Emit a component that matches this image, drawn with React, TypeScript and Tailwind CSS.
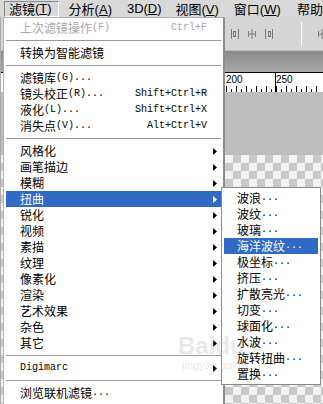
import React from "react";

type Item =
  | { kind: "sep" }
  | { kind: "row"; name: string; suffix?: string; shortcut?: string; sub?: boolean; active?: boolean; disabled?: boolean };

const mainItems: Item[] = [
  { kind: "row", name: "上次滤镜操作", suffix: "(F)", shortcut: "Ctrl+F", disabled: true },
  { kind: "sep" },
  { kind: "row", name: "转换为智能滤镜" },
  { kind: "sep" },
  { kind: "row", name: "滤镜库", suffix: "(G)..." },
  { kind: "row", name: "镜头校正", suffix: "(R)...", shortcut: "Shift+Ctrl+R" },
  { kind: "row", name: "液化", suffix: "(L)...", shortcut: "Shift+Ctrl+X" },
  { kind: "row", name: "消失点", suffix: "(V)...", shortcut: "Alt+Ctrl+V" },
  { kind: "sep" },
  { kind: "row", name: "风格化", sub: true },
  { kind: "row", name: "画笔描边", sub: true },
  { kind: "row", name: "模糊", sub: true },
  { kind: "row", name: "扭曲", sub: true, active: true },
  { kind: "row", name: "锐化", sub: true },
  { kind: "row", name: "视频", sub: true },
  { kind: "row", name: "素描", sub: true },
  { kind: "row", name: "纹理", sub: true },
  { kind: "row", name: "像素化", sub: true },
  { kind: "row", name: "渲染", sub: true },
  { kind: "row", name: "艺术效果", sub: true },
  { kind: "row", name: "杂色", sub: true },
  { kind: "row", name: "其它", sub: true },
  { kind: "sep" },
  { kind: "row", name: "", suffix: "Digimarc", sub: true },
  { kind: "sep" },
  { kind: "row", name: "浏览联机滤镜", suffix: "..." },
];

const subItems = [
  "波浪", "波纹", "玻璃", "海洋波纹", "极坐标", "挤压",
  "扩散亮光", "切变", "球面化", "水波", "旋转扭曲", "置换",
];

const cjk = { fontFamily: '"Noto Sans CJK SC", sans-serif' };
const mono = { fontFamily: '"Liberation Mono", monospace' };
const sans = { fontFamily: '"Liberation Sans", sans-serif' };

function Arrow({ white }: { white?: boolean }) {
  return (
    <svg width="4" height="7" viewBox="0 0 4 7" className="mr-[4px]">
      <path d="M0 0 L4 3.5 L0 7 Z" fill={white ? "#fff" : "#000"} />
    </svg>
  );
}

function Sep() {
  return (
    <div className="h-[9px] flex flex-col justify-center">
      <div className="h-px bg-[#9a9a9a]" />
      <div className="h-px bg-white" />
    </div>
  );
}

function Row({ item }: { item: Extract<Item, { kind: "row" }> }) {
  const color = item.disabled ? "text-[#a8a8a8]" : item.active ? "text-white" : "text-black";
  return (
    <div className={`h-4 flex items-center pl-[14px] ${item.active ? "bg-[#316ac5]" : ""} ${color}`}>
      <span className="text-[12px] leading-none" style={cjk}>{item.name}</span>
      {item.suffix && <span className="text-[10px] leading-none" style={mono}>{item.suffix}</span>}
      <div className="flex-1" />
      {item.shortcut && <span className="text-[10px] leading-none pr-[14px]" style={mono}>{item.shortcut}</span>}
      {item.sub && <Arrow white={item.active} />}
    </div>
  );
}

function ToolIcon({ kind }: { kind: number }) {
  return (
    <svg width="10" height="12" viewBox="0 0 10 12">
      {kind === 0 && (
        <g stroke="#7a7a7a" fill="none">
          <path d="M1.5 1 V11" />
          <rect x="3.5" y="3.5" width="2" height="5" />
          <path d="M8.5 1 V11" />
        </g>
      )}
      {kind === 1 && (
        <g stroke="#7a7a7a" fill="none">
          <path d="M1.5 3 V9" />
          <path d="M5 1 V11" />
          <path d="M1.5 6 H8.5" />
          <path d="M8.5 3 V9" />
        </g>
      )}
      {kind === 2 && (
        <g stroke="#7a7a7a" fill="none">
          <path d="M1.5 1 V11" />
          <rect x="4.5" y="3.5" width="2" height="5" />
          <path d="M8.5 1 V11" />
        </g>
      )}
    </svg>
  );
}

export default function App() {
  return (
    <div className="relative w-[323px] h-[404px] overflow-hidden bg-[#c8c8c8]" style={cjk}>
      {/* menubar */}
      <div className="h-[17px] bg-[#d9d9d9] flex items-center text-[13px] text-black leading-none">
        <div className="ml-[4px] w-[56px] h-[16px] flex items-center pl-[4px] border-t border-l border-[#888] border-b border-r border-b-white border-r-white">
          滤镜<span style={sans}>(<span className="underline">T</span>)</span>
        </div>
        <div className="ml-[10px] w-[60px]">分析<span style={sans}>(<span className="underline">A</span>)</span></div>
        <div className="w-[50px]" style={sans}>3D(<span className="underline">D</span>)</div>
        <div className="w-[60px]">视图<span style={sans}>(<span className="underline">V</span>)</span></div>
        <div className="w-[65px]">窗口<span style={sans}>(<span className="underline">W</span>)</span></div>
        <div className="whitespace-nowrap">帮助</div>
      </div>

      {/* workspace */}
      <div className="flex h-[387px]">
        <div className="w-[3px] bg-[#cfcfcf] border-r border-[#aaa]" />
        <div className="flex-1 flex flex-col">
          <div className="h-[33px] bg-[#d6d6d6] flex items-center pl-[229px] gap-[7px]">
            <ToolIcon kind={0} />
            <ToolIcon kind={1} />
            <ToolIcon kind={2} />
            <div className="ml-[20px] w-px h-[24px] bg-[#9a9a9a] border-r border-white" />
            <div className="ml-[8px]"><ToolIcon kind={1} /></div>
          </div>
          <div className="h-[22px] bg-gradient-to-b from-[#8a8a8a] to-[#a8a8a8] border-t border-[#c0c0c0]" />
          <div className="h-[20px] bg-white border-t border-black relative flex items-start pl-[225px]">
            <span className="text-[10px] leading-none mt-[2px] text-black w-[49px]" style={sans}>200</span>
            <div className="w-px h-full bg-black" />
            <span className="text-[10px] leading-none mt-[2px] text-black" style={sans}>250</span>
            <svg className="absolute left-0 bottom-0" width="320" height="6">
              {Array.from({ length: 22 }).map((_, i) => {
                const x = 225 + i * 5;
                return <line key={i} x1={x + 0.5} x2={x + 0.5} y1={i % 2 === 0 ? 0 : 3} y2={6} stroke="#000" />;
              })}
            </svg>
          </div>
          <div className="h-[63px] bg-[#bdbdbd]" />
          <div className="flex-1 bg-[conic-gradient(#c9c9c9_25%,#f2f2f2_0_50%,#c9c9c9_0_75%,#f2f2f2_0)] bg-[length:16px_16px]" />
        </div>
      </div>

      {/* main dropdown */}
      <div className="absolute left-[3px] top-[17px] w-[222px] h-[392px] bg-white border-l border-t border-[#b0b0b0] border-r-2 border-r-[#8c8c8c] pt-[2px] px-[2px]">
        {mainItems.map((it, i) => (it.kind === "sep" ? <Sep key={i} /> : <Row key={i} item={it} />))}
      </div>

      {/* submenu */}
      <div className="absolute left-[221px] top-[187px] w-[100px] bg-white border border-[#8c8c8c] py-[2px] px-[2px]">
        {subItems.map((s) => {
          const active = s === "海洋波纹";
          return (
            <div key={s} className={`h-4 flex items-center pl-[13px] ${active ? "bg-[#316ac5] text-white" : "text-black"}`}>
              <span className="text-[12px] leading-none" style={cjk}>{s}</span>
              <span className="text-[10px] leading-none" style={mono}>...</span>
            </div>
          );
        })}
      </div>

      {/* watermark */}
      <div className="absolute left-[178px] top-[334px] pointer-events-none text-[rgba(190,190,190,0.35)] leading-none" style={sans}>
        <div className="text-[24px] font-bold">Baidu</div>
        <div className="text-[11px] ml-[4px] mt-[2px]">jingyan.baidu</div>
      </div>
    </div>
  );
}
